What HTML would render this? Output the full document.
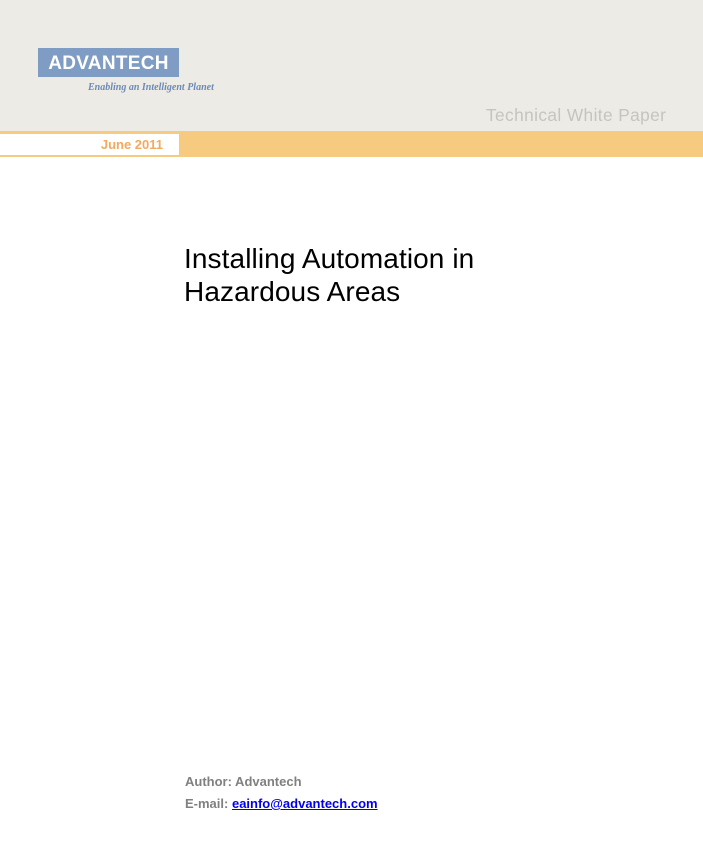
<!DOCTYPE html>
<html><head><style>
body{margin:0;width:703px;height:861px;background:#fff;position:relative;font-family:"Liberation Sans",sans-serif;overflow:hidden}
.hdr{position:absolute;left:0;top:0;width:703px;height:131px;background:#ecebe6}
.band{position:absolute;left:0;top:131px;width:703px;height:26px;background:#f6cb80}
.date{position:absolute;left:0;top:134px;width:179px;height:21px;background:#fff;color:#f4a860;font-weight:bold;font-size:13px;line-height:22px;text-align:right;box-sizing:border-box;padding-right:16px}
.logo{position:absolute;left:38px;top:48px;width:141px;height:29px;background:#7e9cc4;color:#fff;font-weight:bold;font-size:19px;line-height:31px;text-align:center;letter-spacing:0.3px}
.tag{position:absolute;left:88px;top:82px;font-family:"Liberation Serif",serif;font-style:italic;font-weight:bold;font-size:10px;color:#6d8ab7}
.twp{position:absolute;left:486px;top:105px;font-size:17.3px;color:#c4c4c0;letter-spacing:0.4px}
.title{position:absolute;left:184px;top:242px;font-size:28px;line-height:33px;color:#000;letter-spacing:0.1px}
.auth{position:absolute;left:185px;top:771px;font-size:13px;font-weight:bold;color:#808080;line-height:22px}
.auth a{color:#0000ee;text-decoration:underline}
</style></head><body>
<div class="hdr"></div>
<div class="logo">ADVANTECH</div>
<div class="tag">Enabling an Intelligent Planet</div>
<div class="twp">Technical White Paper</div>
<div class="band"></div>
<div class="date">June 2011</div>
<div class="title">Installing Automation in<br>Hazardous Areas</div>
<div class="auth">Author: Advantech<br>E-mail: <a>eainfo@advantech.com</a></div>
</body></html>
